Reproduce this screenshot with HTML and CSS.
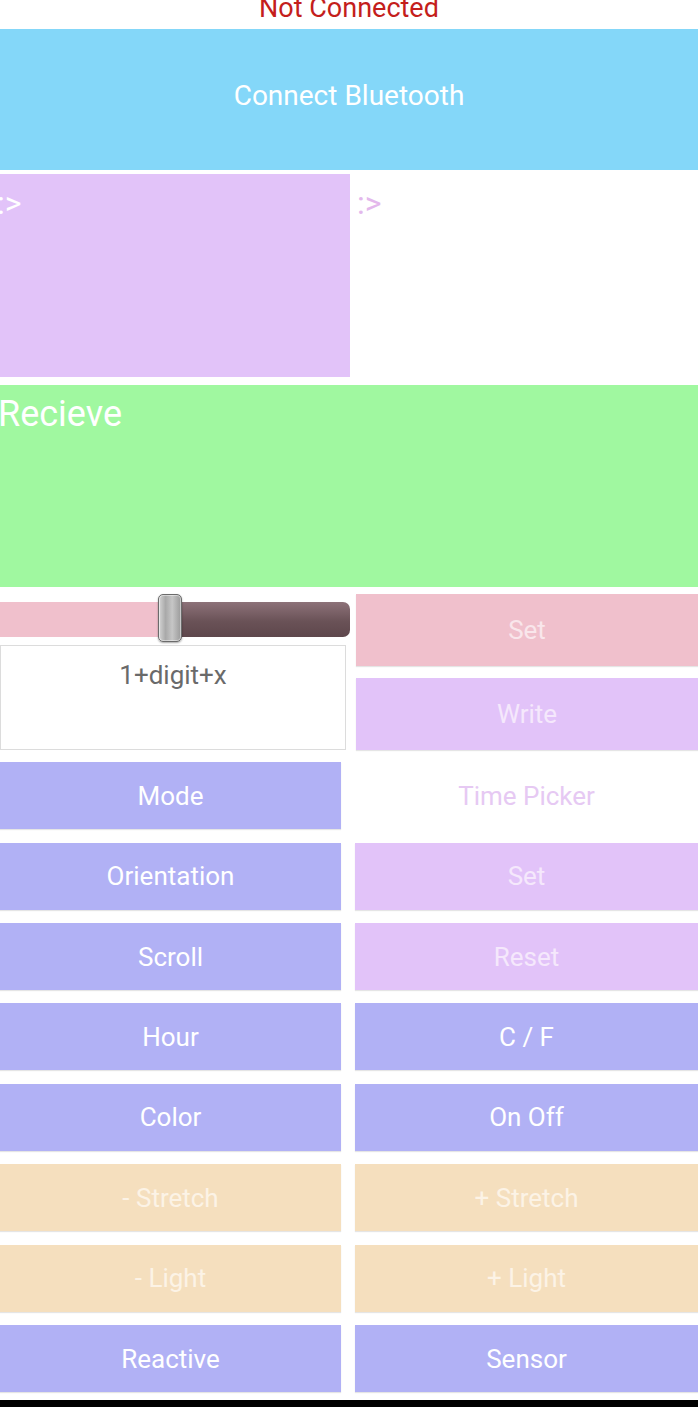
FILE: index.html
```html
<!DOCTYPE html>
<html lang="en">
<head>
<meta charset="utf-8">
<title>Bluetooth Control</title>
<link rel="stylesheet" href="styles.css">
</head>
<body>
<div class="page">
  <div class="status">Not Connected</div>
  <div class="connect">Connect Bluetooth</div>
  <div class="io">
    <div class="term term-a">:&gt;</div>
    <div class="term term-b">:&gt;</div>
  </div>
  <div class="receive">Recieve</div>
  <div class="control">
    <div class="control-left">
      <div class="slider">
        <div class="track">
          <div class="track-fill"></div>
          <div class="track-rest"></div>
        </div>
        <div class="thumb"></div>
      </div>
      <div class="input">1+digit+x</div>
    </div>
    <div class="control-right">
      <div class="btn pink">Set</div>
      <div class="btn purple">Write</div>
    </div>
  </div>
  <div class="grid">
    <div class="btn blue">Mode</div>
    <div class="label">Time Picker</div>
    <div class="btn blue">Orientation</div>
    <div class="btn purple">Set</div>
    <div class="btn blue">Scroll</div>
    <div class="btn purple">Reset</div>
    <div class="btn blue">Hour</div>
    <div class="btn blue">C / F</div>
    <div class="btn blue">Color</div>
    <div class="btn blue">On Off</div>
    <div class="btn peach">- Stretch</div>
    <div class="btn peach">+ Stretch</div>
    <div class="btn peach">- Light</div>
    <div class="btn peach">+ Light</div>
    <div class="btn blue">Reactive</div>
    <div class="btn blue">Sensor</div>
  </div>
  <div class="bottom-bar"></div>
</div>
</body>
</html>
```

FILE: styles.css
```css
html, body {
  margin: 0;
  padding: 0;
  background: #ffffff;
}

.page {
  width: 698px;
  height: 1407px;
  overflow: hidden;
  font-family: Roboto, "Liberation Sans", sans-serif;
  display: flex;
  flex-direction: column;
}

.status {
  height: 29px;
  line-height: 16px;
  font-size: 27px;
  color: #c41e1c;
  text-align: center;
  overflow: hidden;
}

.connect {
  height: 141px;
  background: #84d7f9;
  color: #ffffff;
  font-size: 28px;
  display: flex;
  align-items: center;
  justify-content: center;
  padding-bottom: 8px;
  box-sizing: border-box;
}

.io {
  margin-top: 4px;
  height: 203px;
  display: flex;
}

.term {
  font-size: 32px;
  padding-top: 14px;
  padding-left: 7px;
  box-sizing: border-box;
  line-height: 30px;
}

.term-a {
  width: 350px;
  background: #e2c3f9;
  color: #ffffff;
  text-indent: -10px;
  overflow: hidden;
}

.term-b {
  flex: 1;
  background: #ffffff;
  color: #e3b8ec;
}

.receive {
  margin-top: 8px;
  height: 203px;
  background: #a0f8a0;
  color: #ffffff;
  font-size: 36px;
  padding-top: 8px;
  text-indent: -2px;
  box-sizing: border-box;
}

.control {
  margin-top: 7px;
  display: flex;
  gap: 6px;
}

.control-left {
  width: 350px;
  display: flex;
  flex-direction: column;
  gap: 1px;
}

.slider {
  position: relative;
  height: 50px;
  display: flex;
  align-items: center;
}

.track {
  width: 100%;
  height: 35px;
  display: flex;
}

.track-fill {
  width: 170px;
  background: #f0c0cc;
}

.track-rest {
  flex: 1;
  background: linear-gradient(#8d7279, #6a5257 55%, #5e474c);
  border-radius: 0 7px 7px 0;
}

.thumb {
  position: absolute;
  left: 158px;
  top: 0;
  width: 22px;
  height: 46px;
  border: 1px solid #6b6b6b;
  border-radius: 5px;
  background: linear-gradient(90deg, #d4d4d4, #a9a9a9 30%, #c6c6c6 60%, #9a9a9a);
  box-shadow: inset 0 0 0 1px rgba(255,255,255,0.45), 0 1px 2px rgba(0,0,0,0.35);
}

.input {
  width: 346px;
  height: 105px;
  box-sizing: border-box;
  border: 1px solid #dcdcdc;
  background: #ffffff;
  color: #6a6a6a;
  font-size: 26px;
  text-align: center;
  padding-top: 14px;
  line-height: 30px;
}

.control-right {
  flex: 1;
  display: flex;
  flex-direction: column;
  gap: 12px;
}

.control-right .btn {
  height: 72px;
}

.btn {
  display: flex;
  align-items: center;
  justify-content: center;
  font-size: 26px;
  color: #ffffff;
  box-shadow: 0 1px 1px rgba(0,0,0,0.10);
}

.pink {
  background: #f0c0cc;
  color: #f9e6eb;
}

.purple {
  background: #e2c3f9;
  color: #f5e8fc;
}

.blue {
  background: #b1b1f5;
  color: #ffffff;
}

.peach {
  background: #f5dfbe;
  color: #fcf3e6;
}

.label {
  display: flex;
  align-items: center;
  justify-content: center;
  font-size: 26px;
  color: #e6c9f3;
}

.grid {
  margin-top: 12px;
  display: grid;
  grid-template-columns: 341px 343px;
  grid-auto-rows: 67px;
  column-gap: 14px;
  row-gap: 13.4px;
}

.bottom-bar {
  margin-top: 8px;
  height: 7px;
  background: #000000;
}
```
